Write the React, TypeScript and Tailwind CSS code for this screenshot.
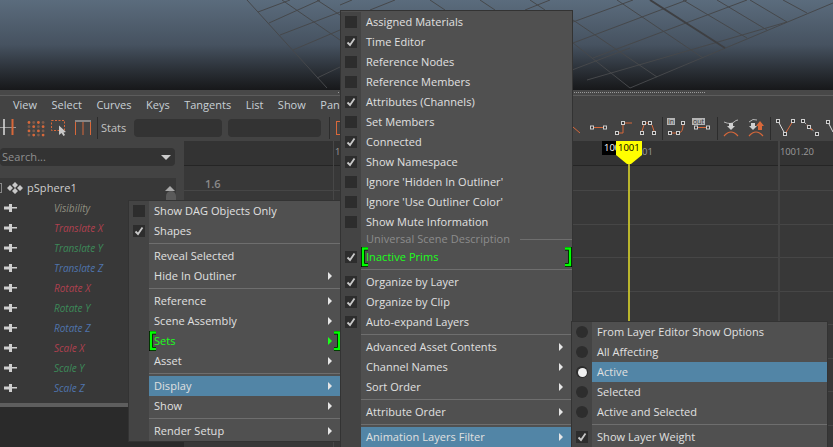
const font = "font-['Open_Sans',sans-serif]";

type Item = { label?: string; check?: boolean; radio?: boolean; box?: boolean; sub?: boolean; on?: boolean; hot?: boolean; sep?: boolean; head?: boolean };

const menuOne: Item[] = [
  { label: 'Show DAG Objects Only', box: true },
  { label: 'Shapes', box: true, check: true },
  { sep: true },
  { label: 'Reveal Selected' },
  { label: 'Hide In Outliner', sub: true },
  { sep: true },
  { label: 'Reference', sub: true },
  { label: 'Scene Assembly', sub: true },
  { label: 'Sets', sub: true, hot: true },
  { label: 'Asset', sub: true },
  { sep: true },
  { label: 'Display', sub: true, on: true },
  { label: 'Show', sub: true },
  { sep: true },
  { label: 'Render Setup', sub: true },
];

const menuTwo: Item[] = [
  { label: 'Assigned Materials', box: true },
  { label: 'Time Editor', box: true, check: true },
  { label: 'Reference Nodes', box: true },
  { label: 'Reference Members', box: true },
  { label: 'Attributes (Channels)', box: true, check: true },
  { label: 'Set Members', box: true },
  { label: 'Connected', box: true, check: true },
  { label: 'Show Namespace', box: true, check: true },
  { label: "Ignore 'Hidden In Outliner'", box: true },
  { label: "Ignore 'Use Outliner Color'", box: true },
  { label: 'Show Mute Information', box: true },
  { label: 'Universal Scene Description', head: true },
  { label: 'Inactive Prims', box: true, check: true, hot: true },
  { sep: true },
  { label: 'Organize by Layer', box: true, check: true },
  { label: 'Organize by Clip', box: true, check: true },
  { label: 'Auto-expand Layers', box: true, check: true },
  { sep: true },
  { label: 'Advanced Asset Contents', sub: true },
  { label: 'Channel Names', sub: true },
  { label: 'Sort Order', sub: true },
  { sep: true },
  { label: 'Attribute Order', sub: true },
  { sep: true },
  { label: 'Animation Layers Filter', sub: true, on: true },
];

const menuThree: Item[] = [
  { label: 'From Layer Editor Show Options', radio: true },
  { label: 'All Affecting', radio: true },
  { label: 'Active', radio: true, on: true },
  { label: 'Selected', radio: true },
  { label: 'Active and Selected', radio: true },
  { sep: true },
  { label: 'Show Layer Weight', box: true, check: true },
];

const channels = [
  { name: 'Visibility', color: 'text-[#8f8f80]' },
  { name: 'Translate X', color: 'text-[#b0404f]' },
  { name: 'Translate Y', color: 'text-[#3c8a58]' },
  { name: 'Translate Z', color: 'text-[#4f74ad]' },
  { name: 'Rotate X', color: 'text-[#b0404f]' },
  { name: 'Rotate Y', color: 'text-[#3c8a58]' },
  { name: 'Rotate Z', color: 'text-[#4f74ad]' },
  { name: 'Scale X', color: 'text-[#b0404f]' },
  { name: 'Scale Y', color: 'text-[#3c8a58]' },
  { name: 'Scale Z', color: 'text-[#4f74ad]' },
];

function Mark({ item }: { item: Item }) {
  if (item.radio) {
    return (
      <span className="flex h-3 w-3 items-center justify-center rounded-full bg-[#2d2d2d]">
        {item.on && <span className="h-[9px] w-[9px] rounded-full bg-[#f0f0f0]" />}
      </span>
    );
  }
  if (!item.box) return null;
  return (
    <span className="flex h-3 w-3 items-center justify-center bg-[#2d2d2d]">
      {item.check && (
        <svg width="10" height="10" viewBox="0 0 10 10">
          <path d="M1.5 5.5 L4 8 L8.5 1.5" fill="none" stroke="#c8c8c8" strokeWidth="1.8" />
        </svg>
      )}
    </span>
  );
}

function Bracket({ right }: { right?: boolean }) {
  return (
    <svg width="7" height="20" viewBox="0 0 7 20" className={`absolute top-0 ${right ? 'right-0 -scale-x-100' : 'left-0'}`}>
      <path d="M7 1.5 H2 V18 H7" fill="none" stroke="#000" strokeWidth="4" />
      <path d="M7 1.5 H2 V18 H7" fill="none" stroke="#00ff00" strokeWidth="2.4" />
    </svg>
  );
}

function Row({ item, gutter }: { item: Item; gutter: string }) {
  if (item.sep) {
    return (
      <div className="flex h-[5px] items-center">
        <div className={`h-full bg-[#444444] ${gutter}`} />
        <div className="h-px flex-1 bg-[#6e6e6e]" />
      </div>
    );
  }
  if (item.head) {
    return (
      <div className="flex h-[15px] items-center">
        <div className={`h-full bg-[#444444] ${gutter}`} />
        <span className="pl-[5px] text-[#8c8c8c]">{item.label}</span>
        <div className="ml-2.5 h-px flex-1 bg-[#6e6e6e]" />
      </div>
    );
  }
  return (
    <div className="flex h-5 items-center">
      <div className={`flex h-full items-center justify-center bg-[#444444] ${gutter}`}>
        <Mark item={item} />
      </div>
      <div className={`relative flex h-full flex-1 items-center pl-[5px] pr-[9px] ${item.on ? 'bg-[#5285a6]' : ''}`}>
        {item.hot && <Bracket />}
        {item.hot && <Bracket right />}
        <span className={`relative ${item.hot ? 'text-[#1cff1c]' : 'text-[#e0e0e0]'}`}>{item.label}</span>
        {item.sub && (
          <span className={`ml-auto h-0 w-0 border-y-[4px] border-l-[4px] border-y-transparent ${item.hot ? 'border-l-[#1cff1c]' : 'border-l-[#e6e6e6]'}`} />
        )}
      </div>
    </div>
  );
}

function Menu({ items, gutter, className }: { items: Item[]; gutter: string; className: string }) {
  return (
    <div className={`absolute overflow-hidden border border-[#333333] bg-[#505050] text-[11px] tracking-[0.05px] ${className}`}>
      {items.map((item, i) => (
        <Row key={i} item={item} gutter={gutter} />
      ))}
    </div>
  );
}

function GridLines() {
  const lines = [
    'M247 0 L327 88', 'M282 0 L340 40', 'M317 0 L340 15', 'M258 12 L290 0', 'M269 23 L320 0',
    'M280 35 L340 12', 'M293 50 L340 30', 'M317 78 L340 67', 'M340 5 L352 0', 'M370 10 L395 0',
    'M430 0 L445 10', 'M480 0 L495 10', 'M530 0 L545 10', 'M525 10 L550 0',
    'M573 43 L630 88', 'M573 20 L657 77', 'M617 0 L703 58', 'M683 0 L747 38', 'M717 0 L767 30',
    'M750 0 L787 22', 'M783 0 L807 13', 'M573 43 L687 0', 'M573 22 L633 0', 'M630 88 L833 3',
    'M587 80 L787 22', 'M593 58 L747 0', 'M572 70 L630 48',
  ];
  return (
    <svg className="absolute inset-0 h-full w-full" viewBox="0 0 833 90">
      {lines.map((d) => (
        <path key={d} d={d} stroke="#46484b" strokeWidth="1" fill="none" />
      ))}
      <path d="M650 0 L725 48" stroke="#3e3f42" strokeWidth="2" />
    </svg>
  );
}

function Nub({ x, y }: { x: number; y: number }) {
  return <rect x={x - 1.5} y={y - 1.5} width="3" height="3" fill="#333" stroke="#cfcfcf" strokeWidth="1" />;
}

function ToolbarLeft() {
  const o = '#d8683a';
  const dots = [];
  for (let a = 0; a < 4; a++) {
    for (let b = 0; b < 4; b++) {
      dots.push(<circle key={`${a}${b}`} cx={29 + b * 4.7} cy={7.5 + a * 4.2} r="1.4" fill={(a + b) % 2 ? '#7a5a4c' : o} />);
    }
  }
  return (
    <svg width="92" height="26" viewBox="0 0 92 26">
      <path d="M0 12.5 H16" stroke="#999" />
      <path d="M4 4 V20" stroke="#ddd" strokeWidth="1.5" />
      <path d="M12.5 4 V20" stroke={o} strokeWidth="2" />
      {dots}
      <rect x="51.5" y="5.5" width="13" height="10" fill="none" stroke={o} strokeDasharray="2 1.5" />
      <path d="M59 10.5 V20 L61.5 18 L63.5 21 L65 20 L63.5 17.5 L66 17 Z" fill="#c9c9c9" />
      <path d="M75 6 H91" stroke="#ccc" />
      <path d="M75.5 7 V20 M83 7 V20 M90.5 7 V20" stroke={o} />
    </svg>
  );
}

function ToolbarRight() {
  const o = '#d8683a';
  const g = '#b5b5b5';
  return (
    <svg width="263" height="26" viewBox="570 115 263 26">
      <path d="M573 127 L580 133" stroke={o} />
      <path d="M592 127.5 H605" stroke={o} />
      <Nub x={592} y={127.5} /><Nub x={605} y={127.5} />
      <path d="M618 133 H623 V124 M625 123 H632" stroke={o} fill="none" />
      <Nub x={617} y={133} /><Nub x={623} y={123} />
      <path d="M642 131 L644 125 M646 123 H649 M652 125 L654 131" stroke={o} fill="none" />
      <Nub x={642} y={133} /><Nub x={644} y={123} /><Nub x={650} y={123} /><Nub x={654} y={133} />
      <path d="M662.5 117 V140 M717.5 117 V140 M770.5 117 V140" stroke="#2c2c2c" />
      <path d="M671 133 H676 M679 133 Q683 132 683 125" stroke={o} fill="none" />
      <Nub x={670} y={133} /><Nub x={678} y={133} /><Nub x={683} y={123} />
      <rect x="667" y="118" width="8" height="7" fill={g} />
      <text x="671" y="124" fontSize="7" textAnchor="middle" fill="#333">in</text>
      <path d="M697 127.5 H708" stroke={o} />
      <Nub x={696} y={127.5} /><Nub x={708} y={127.5} />
      <rect x="692" y="118" width="13" height="7" fill={g} />
      <text x="698.5" y="124" fontSize="7" textAnchor="middle" fill="#333">out</text>
      <path d="M724 122 Q731 125 734 122 Q736 120 738 120" stroke={g} fill="none" />
      <path d="M729 123 H733 V126 H735 L731 130 L727 126 H729 Z" fill="#d0d0d0" />
      <path d="M724 136 Q731 128 738 136" stroke={o} fill="none" strokeWidth="1.2" />
      <path d="M749 122 Q753 118 757 120" stroke={g} fill="none" />
      <path d="M751 123 H755 V126 H757 L753 130 L749 126 H751 Z" fill="#d0d0d0" />
      <path d="M758 130 V126 H756 L760 121 L764 126 H762 V130 Z" fill={o} />
      <path d="M749 136 Q756 128 763 136" stroke={o} fill="none" strokeWidth="1.2" />
      <path d="M778 121 L785 134" stroke="#ddd" fill="none" />
      <path d="M785 134 L793 121" stroke={o} fill="none" />
      <Nub x={778} y={121} /><Nub x={785} y={134} /><Nub x={793} y={121} />
      <path d="M804 122 L817 134" stroke={g} strokeDasharray="3 2" />
      <path d="M807 125 L812 130" stroke={o} strokeWidth="1.5" />
      <Nub x={803} y={121} /><Nub x={809} y={127} /><Nub x={817} y={134} />
      <path d="M828 122 L833 132" stroke="#ddd" />
      <Nub x={828} y={122} />
    </svg>
  );
}

function KeyIcon() {
  return (
    <svg width="13" height="8" viewBox="0 0 13 8">
      <path d="M0 2.5 H5 V0 H8 V3 H13 V4.5 H8 V8 H5 V5.5 H0 Z" fill="#cfcfcf" />
    </svg>
  );
}

export default function App() {
  return (
    <div className={`relative h-[447px] w-[833px] overflow-hidden bg-[#2a2a2a] ${font}`}>
      <div className="relative h-[90px] bg-gradient-to-b from-[#5b6c7d] via-[#465260] to-[#17181a]">
        <GridLines />
      </div>
      <div className="h-[6px] border-b border-[#5c5c5c] bg-[#484848] pl-[338px] pt-[2px]">
        <div className="w-[367px] border-t border-dotted border-[#9a9a9a]" />
      </div>

      <div className="flex h-[19px] items-center gap-[14.5px] bg-[#434343] pb-px pl-[13px] text-[11px] text-[#c8d0d6]">
        {['View', 'Select', 'Curves', 'Keys', 'Tangents', 'List', 'Show', 'Pane'].map((m) => (
          <span key={m}>{m}</span>
        ))}
      </div>

      <div className="flex h-[26px] items-center justify-between bg-[#434343]">
        <div className="flex items-center">
          <ToolbarLeft />
          <div className="ml-[5px] h-[22px] w-px bg-[#2c2c2c]" />
          <span className="ml-[3px] w-[33px] text-[11px] text-[#c4c4c4]">Stats</span>
          <div className="h-[18px] w-[88px] rounded-sm bg-[#333333]" />
          <div className="ml-1.5 h-[18px] w-[93px] rounded-sm bg-[#333333]" />
          <div className="ml-2 h-[22px] w-px bg-[#2c2c2c]" />
          <div className="ml-1.5 h-[14px] w-[5px] border-y border-l border-[#d8683a]" />
        </div>
        <ToolbarRight />
      </div>

      <div className="flex h-[306px] bg-[#434343]">
        <div className="flex w-[184px] flex-col">
          <div className="pt-[7px]">
            <div className="flex h-[18px] w-[175px] items-center justify-between rounded-sm bg-[#333333] pl-0.5 pr-1 pt-px text-[11px] tracking-[0.05px] text-[#8f8f8f]">
              <span>Search...</span>
              <span className="h-0 w-0 border-x-[5px] border-t-[5px] border-x-transparent border-t-[#cccccc]" />
            </div>
          </div>
          <div className="relative mt-3 h-[225px] w-[176px] bg-[#383838]">
            <div className="absolute left-[166px] top-[13px] h-[30px] w-[10px] rounded-t-full bg-[#5a5a5a]" />
            <div className="flex h-5 items-center gap-1 text-[11px] tracking-[0.05px] text-[#cfcfcf]">
              <span className="ml-[-6px] h-2.5 w-2 border border-[#888888]" />
              <svg width="16" height="12" viewBox="0 0 16 12" className="ml-px">
                <path d="M8 0 L11 3 L8 6 L5 3 Z M3 3 L6 6 L3 9 L0 6 Z M13 3 L16 6 L13 9 L10 6 Z M8 6 L11 9 L8 12 L5 9 Z" fill="#c8c8c8" />
              </svg>
              <span>pSphere1</span>
              <span className="ml-auto mr-px h-0 w-0 border-x-[5px] border-b-[5px] border-x-transparent border-b-[#aaaaaa]" />
            </div>
            {channels.map((c) => (
              <div key={c.name} className="flex h-5 items-center pl-1">
                <KeyIcon />
                <span className={`ml-[37px] text-[10px] italic ${c.color}`}>{c.name}</span>
              </div>
            ))}
          </div>
          <div className="h-1 w-[128px] bg-[#5e5e5e]" />
          <div className="flex-1 bg-[#2a2a2a]" />
        </div>

        <div className="relative flex-1 bg-[#383838]">
          <div className="relative h-[25px] border-b border-[#252525] bg-[#333333] text-[9.5px] text-[#9a9a9a]">
            <span className="absolute left-[151px] top-1">1</span>
            <span className="absolute left-[596px] top-1 tracking-[-0.2px]">1001.20</span>
            <span className="absolute left-[458px] top-1">01</span>
            <span className="absolute left-[418px] top-0 h-[14px] w-[14px] overflow-hidden bg-black pl-0.5 leading-[14px] text-white">100</span>
          </div>
          <div className="absolute left-0 right-0 top-[25px]">
            <div className="h-[25px] border-b border-[#464646]" />
            <div className="h-[34px] border-b border-[#464646]" />
            <div className="h-[33px] border-b border-[#464646]" />
            <div className="h-[34px] border-b border-[#464646]" />
            <div className="h-[33px] border-b border-[#464646]" />
            <div className="h-[34px] border-b border-[#464646]" />
            <div className="h-[33px] border-b border-[#464646]" />
            <div className="h-[34px] border-b border-[#464646]" />
          </div>
          <div className="absolute left-[149px] top-0 h-full w-px bg-[#474747]" />
          <div className="absolute left-[594px] top-0 h-full w-0.5 bg-[#444444]" />
          <span className="absolute left-[21px] top-[35px] text-[11px] font-semibold text-[#8a8a8a]">1.6</span>
          <div className="absolute left-[444px] top-[23px] h-[160px] w-0.5 bg-[#b9b52c]" />
          <svg className="absolute left-[432px] top-0" width="26" height="24" viewBox="0 0 26 24">
            <path d="M0 0 H26 V14 L15 23 H11 L0 14 Z" fill="#ffff00" />
          </svg>
          <span className="absolute left-[434px] top-0 text-[9.5px] leading-[14px] text-black">1001</span>
        </div>
      </div>

      <Menu items={menuOne} gutter="w-5" className="left-[128px] top-[200px] w-[214px]" />
      <Menu items={menuTwo} gutter="w-5" className="left-[340px] top-[10px] h-[440px] w-[233px] pt-[1px]" />
      <Menu items={menuThree} gutter="w-5" className="left-[571px] top-[321px] h-[130px] w-[257px]" />
    </div>
  );
}
